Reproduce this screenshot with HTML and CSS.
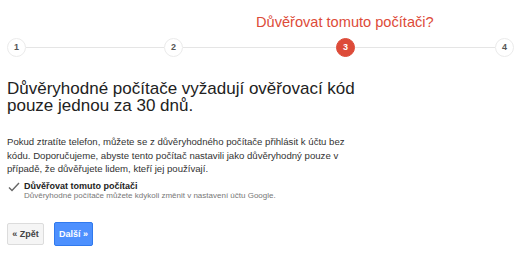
FILE: index.html
```html
<!DOCTYPE html>
<html lang="cs">
<head>
<meta charset="utf-8">
<link rel="stylesheet" href="styles.css">
</head>
<body>
<div class="page">
  <div class="progress">
    <div class="progress-title">Důvěřovat tomuto počítači?</div>
    <div class="steps">
      <span class="step">1</span>
      <span class="line line-a"></span>
      <span class="step">2</span>
      <span class="line line-b"></span>
      <span class="step current">3</span>
      <span class="line line-c"></span>
      <span class="step">4</span>
    </div>
  </div>
  <h1 class="heading">Důvěryhodné počítače vyžadují ověřovací kód pouze jednou za 30 dnů.</h1>
  <p class="text">Pokud ztratíte telefon, můžete se z důvěryhodného počítače přihlásit k účtu bez kódu. Doporučujeme, abyste tento počítač nastavili jako důvěryhodný pouze v případě, že důvěřujete lidem, kteří jej používají.</p>
  <div class="check">
    <svg class="checkmark" width="12" height="10" viewBox="0 0 12 10"><path d="M1 5.5 L4 8.5 L11 1" fill="none" stroke="#666" stroke-width="1.4"/></svg>
    <div class="check-text">
      <div class="check-label">Důvěřovat tomuto počítači</div>
      <div class="check-note">Důvěryhodné počítače můžete kdykoli změnit v nastavení účtu Google.</div>
    </div>
  </div>
  <div class="buttons">
    <button class="btn btn-back">« Zpět</button>
    <button class="btn btn-next">Další »</button>
  </div>
</div>
</body>
</html>
```
FILE: styles.css
```css
* { box-sizing: border-box; }
html, body { margin: 0; padding: 0; background: #fff; }
body { font-family: "Liberation Sans", Arial, sans-serif; color: #222; }
.page { padding: 13px 6px 0 7px; width: 520px; }
.progress-title {
  font-size: 14.6px; color: #dd4b39;
  padding-left: 249px; height: 24px; line-height: 18px;
}
.steps { display: flex; align-items: center; height: 20px; }
.step {
  width: 19px; height: 19px; border-radius: 50%;
  border: 1px solid #ebebeb; background: #fff;
  display: flex; align-items: center; justify-content: center;
  font-size: 9px; font-weight: bold; color: #555; flex: none;
}
.step.current { background: #dd4b39; border-color: #dd4b39; color: #fff; }
.line { height: 1px; background: #e5e5e5; flex: none; }
.line-a { width: 138px; }
.line-b { width: 153px; }
.line-c { width: 140px; }
.heading {
  margin: 23px 0 0; font-size: 17px; font-weight: normal; line-height: 17px;
  width: 365px; color: #222;
}
.text {
  margin: 21px 0 0; font-size: 9.6px; line-height: 13.6px; color: #333; width: 345px;
}
.check { display: flex; margin-top: 5px; }
.checkmark { margin: 1px 4px 0 1px; flex: none; }
.check-label { font-size: 9px; font-weight: bold; color: #222; line-height: 10px; }
.check-note { font-size: 8px; color: #777; line-height: 10px; }
.buttons { display: flex; gap: 10px; margin-top: 22px; }
.btn {
  font-family: inherit; font-size: 9px; font-weight: bold; height: 22px;
  border-radius: 2px; padding: 0;
}
.btn-back { background: #f5f5f5; border: 1px solid #dcdcdc; color: #444; width: 37px; }
.btn-next { background: #4d90fe; border: 1px solid #3079ed; color: #fff; width: 39px; height: 24px; margin-top: -1px; }
```
